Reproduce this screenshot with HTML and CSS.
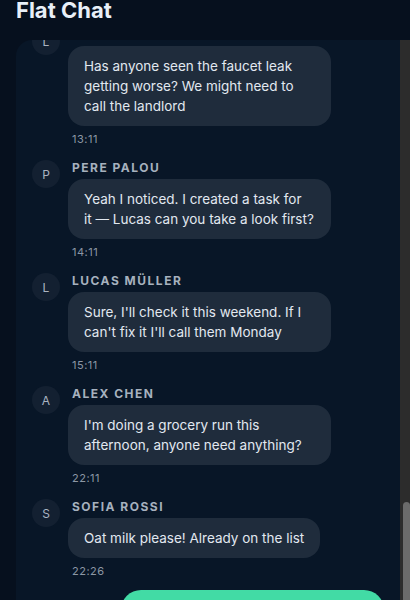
FILE: index.html
```html
<!DOCTYPE html>
<html lang="en">
<head>
  <meta charset="UTF-8">
  <meta name="viewport" content="width=device-width, initial-scale=1.0">
  <title>Flat Chat</title>
  <link rel="stylesheet" href="styles.css">
</head>
<body>
  <header class="topbar">
    <h1>Flat Chat</h1>
  </header>

  <div class="chat-frame">
    <main class="chat">
      <div class="thread">

        <div class="message">
          <div class="avatar">A</div>
          <div class="message-body">
            <div class="author">Alex Chen</div>
            <div class="bubble">Does anyone mind if my sister stays over on Thursday?</div>
            <div class="time">09:14</div>
          </div>
        </div>

        <div class="message">
          <div class="avatar">S</div>
          <div class="message-body">
            <div class="author">Sofia Rossi</div>
            <div class="bubble">Not at all, she's welcome</div>
            <div class="time">09:20</div>
          </div>
        </div>

        <div class="message">
          <div class="avatar">L</div>
          <div class="message-body">
            <div class="author">Lucas Müller</div>
            <div class="bubble">Fine by me</div>
            <div class="time">09:41</div>
          </div>
        </div>

        <div class="message">
          <div class="avatar">P</div>
          <div class="message-body">
            <div class="author">Pere Palou</div>
            <div class="bubble">Sure, there are clean towels in the cupboard</div>
            <div class="time">10:02</div>
          </div>
        </div>

        <div class="message">
          <div class="avatar">S</div>
          <div class="message-body">
            <div class="author">Sofia Rossi</div>
            <div class="bubble">Morning all! Reminder that the recycling goes out tonight</div>
            <div class="time">11:30</div>
          </div>
        </div>

        <div class="message">
          <div class="avatar">A</div>
          <div class="message-body">
            <div class="author">Alex Chen</div>
            <div class="bubble">Thanks, I'll take it down after dinner</div>
            <div class="time">11:45</div>
          </div>
        </div>

        <div class="message">
          <div class="avatar">P</div>
          <div class="message-body">
            <div class="author">Pere Palou</div>
            <div class="bubble">Has anyone got the spare key? Mine is still at work</div>
            <div class="time">13:05</div>
          </div>
        </div>

        <div class="message">
          <div class="avatar">L</div>
          <div class="message-body">
            <div class="author">Lucas Müller</div>
            <div class="bubble">It's in the drawer by the door, under the takeaway menus</div>
            <div class="time">13:09</div>
          </div>
        </div>

        <div class="message">
          <div class="avatar">P</div>
          <div class="message-body">
            <div class="author">Pere Palou</div>
            <div class="bubble">Found it, thanks!</div>
            <div class="time">13:12</div>
          </div>
        </div>

        <div class="message">
          <div class="avatar">A</div>
          <div class="message-body">
            <div class="author">Alex Chen</div>
            <div class="bubble">Rent is due on Friday, I've put the split in the shared sheet</div>
            <div class="time">16:40</div>
          </div>
        </div>

        <div class="message">
          <div class="avatar">S</div>
          <div class="message-body">
            <div class="author">Sofia Rossi</div>
            <div class="bubble">Paid mine already</div>
            <div class="time">16:52</div>
          </div>
        </div>

        <div class="message">
          <div class="avatar">L</div>
          <div class="message-body">
            <div class="author">Lucas Müller</div>
            <div class="bubble">Same, just sent it over</div>
            <div class="time">17:03</div>
          </div>
        </div>

        <div class="message">
          <div class="avatar">S</div>
          <div class="message-body">
            <div class="author">Sofia Rossi</div>
            <div class="bubble">Who's in for a movie night on Saturday? I can make popcorn</div>
            <div class="time">19:18</div>
          </div>
        </div>

        <div class="message">
          <div class="avatar">A</div>
          <div class="message-body">
            <div class="author">Alex Chen</div>
            <div class="bubble">Count me in!</div>
            <div class="time">19:20</div>
          </div>
        </div>

        <div class="message">
          <div class="avatar">P</div>
          <div class="message-body">
            <div class="author">Pere Palou</div>
            <div class="bubble">I'm away this weekend, have fun though</div>
            <div class="time">19:34</div>
          </div>
        </div>

        <div class="message">
          <div class="avatar">L</div>
          <div class="message-body">
            <div class="author">Lucas Müller</div>
            <div class="bubble">I'm in too. Can we pick something that isn't a horror film this time?</div>
            <div class="time">20:01</div>
          </div>
        </div>

        <div class="message">
          <div class="avatar">A</div>
          <div class="message-body">
            <div class="author">Alex Chen</div>
            <div class="bubble">The wifi keeps dropping, did anyone touch the router?</div>
            <div class="time">08:12</div>
          </div>
        </div>

        <div class="message">
          <div class="avatar">P</div>
          <div class="message-body">
            <div class="author">Pere Palou</div>
            <div class="bubble">I restarted it this morning, should be fine now</div>
            <div class="time">09:47</div>
          </div>
        </div>

        <div class="message">
          <div class="avatar">L</div>
          <div class="message-body">
            <div class="author">Lucas Müller</div>
            <div class="bubble">Has anyone seen the faucet leak getting worse? We might need to call the landlord</div>
            <div class="time">13:11</div>
          </div>
        </div>

        <div class="message">
          <div class="avatar">P</div>
          <div class="message-body">
            <div class="author">Pere Palou</div>
            <div class="bubble">Yeah I noticed. I created a task for it&nbsp;— Lucas can you take a look first?</div>
            <div class="time">14:11</div>
          </div>
        </div>

        <div class="message">
          <div class="avatar">L</div>
          <div class="message-body">
            <div class="author">Lucas Müller</div>
            <div class="bubble">Sure, I'll check it this weekend. If I can't fix it I'll call them Monday</div>
            <div class="time">15:11</div>
          </div>
        </div>

        <div class="message">
          <div class="avatar">A</div>
          <div class="message-body">
            <div class="author">Alex Chen</div>
            <div class="bubble">I'm doing a grocery run this afternoon, anyone need anything?</div>
            <div class="time">22:11</div>
          </div>
        </div>

        <div class="message">
          <div class="avatar">S</div>
          <div class="message-body">
            <div class="author">Sofia Rossi</div>
            <div class="bubble">Oat milk please! Already on the list</div>
            <div class="time">22:26</div>
          </div>
        </div>

        <div class="message own">
          <div class="bubble">Got it, I'll grab bread too</div>
        </div>

      </div>
    </main>

    <div class="scrollbar">
      <div class="scrollbar-thumb"></div>
    </div>
  </div>
</body>
</html>
```

FILE: styles.css
```css
html, body {
  overflow: hidden;
}

body {
  margin: 0;
  background-color: #06101e;
  color: #e2e8f0;
  font-family: 'Inter', 'Noto Sans', sans-serif;
}

.topbar {
  height: 40px;
  padding: 0 16px;
}

.topbar h1 {
  margin: 0;
  font-size: 22px;
  line-height: 20px;
  font-weight: 700;
  color: #e8eff8;
}

.chat-frame {
  display: flex;
  height: 100vh;
  margin-left: 16px;
}

/* column-reverse keeps the thread scrolled to the newest message */
.chat {
  flex: 1;
  min-width: 0;
  background-color: #081627;
  border-top-left-radius: 16px;
  display: flex;
  flex-direction: column-reverse;
  overflow-y: auto;
  scrollbar-width: none;
}

.chat::-webkit-scrollbar {
  display: none;
}

.scrollbar {
  width: 10px;
  flex-shrink: 0;
  background-color: #2c2c2c;
}

.scrollbar-thumb {
  height: 140px;
  margin: 462px 0 0 3px;
  border-radius: 4px 4px 0 0;
  background-color: #6b6b6b;
}

.thread {
  display: flex;
  flex-direction: column;
  gap: 13px;
  padding: 16px 16px 10px;
}

.message {
  display: flex;
  align-items: flex-start;
  gap: 8px;
}

.avatar {
  width: 28px;
  height: 28px;
  flex-shrink: 0;
  border-radius: 50%;
  background-color: #132031;
  color: #aab4c1;
  font-size: 12px;
  display: flex;
  align-items: center;
  justify-content: center;
}

.message-body {
  display: flex;
  flex-direction: column;
  align-items: flex-start;
  min-width: 0;
}

.author {
  padding-left: 4px;
  margin-bottom: 3px;
  font-size: 12px;
  line-height: 16px;
  font-weight: 700;
  letter-spacing: 1.5px;
  text-transform: uppercase;
  color: #a6b1be;
}

.bubble {
  max-width: 263px;
  box-sizing: border-box;
  padding: 10px 16px;
  border-radius: 16px;
  background-color: #1f2c3c;
  font-size: 13.5px;
  line-height: 20px;
  color: #e2e8f0;
}

.time {
  padding-left: 4px;
  margin-top: 5px;
  font-size: 11px;
  line-height: 16px;
  letter-spacing: 0.5px;
  color: #8c97a5;
}

.message.own {
  justify-content: flex-end;
  margin-top: -2px;
}

.message.own .bubble {
  width: 263px;
  border-radius: 20px;
  background-color: #42dba5;
  color: #04121f;
}
```
